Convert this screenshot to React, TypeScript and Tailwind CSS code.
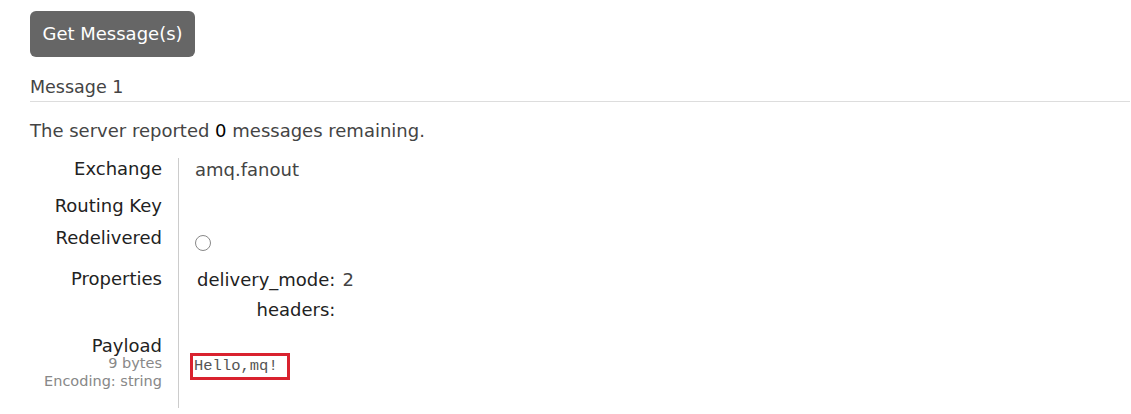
import React from 'react';

const font = { fontFamily: '"DejaVu Sans", Verdana, sans-serif' };

export default function App() {
  return (
    <div className="min-h-screen bg-white pl-[30px] pr-[1px] pt-[11px] text-[18px] leading-[22px] text-[#444]" style={font}>
      <button className="h-[46px] w-[165px] rounded-[6px] bg-[#666] text-white text-[18px]" style={font}>
        Get Message(s)
      </button>

      <div className="mt-[19px] border-b border-[#ddd] pb-[3px] text-[17.5px]">Message 1</div>

      <p className="mt-[18px]">
        The server reported <span className="text-black">0</span> messages remaining.
      </p>

      <div className="mt-[16px] grid grid-cols-[148px_1fr]">
        <div className="h-[37px] pr-4 text-right text-[#222]">Exchange</div>
        <div className="h-[37px] border-l border-[#ccc] pl-4 pt-[1px]">amq.fanout</div>

        <div className="h-[32px] pr-4 text-right text-[#222]">Routing Key</div>
        <div className="h-[32px] border-l border-[#ccc] pl-4"></div>

        <div className="h-[41px] pr-4 text-right text-[#222]">Redelivered</div>
        <div className="h-[41px] border-l border-[#ccc] pl-4 pt-[8px]">
          <span className="block h-[16px] w-[16px] rounded-full border border-[#888] bg-white" />
        </div>

        <div className="h-[67px] pr-4 text-right text-[#222]">Properties</div>
        <div className="h-[67px] border-l border-[#ccc] pl-[18px] pt-[1px]">
          <div className="grid w-fit grid-cols-[auto_auto] gap-x-[7px] gap-y-[8px]">
            <span className="text-right text-[#222]">delivery_mode:</span>
            <span className="text-[#444]">2</span>
            <span className="text-right text-[#222]">headers:</span>
            <span></span>
          </div>
        </div>

        <div className="h-[73px] pr-4 text-right text-[#222]">
          <div>Payload</div>
          <div className="mt-[-3px] text-[14.5px] leading-[18px] text-[#888]">9 bytes</div>
          <div className="text-[14.5px] leading-[18px] text-[#888]">Encoding: string</div>
        </div>
        <div className="h-[73px] border-l border-[#ccc] pl-[11px] pt-[18px]">
          <div className="flex h-[27px] w-[100px] items-center border-[3px] border-[#d9222f] pl-[1px]">
            <span className="text-[15.5px] leading-none text-[#555]" style={{ fontFamily: '"Liberation Mono", "Courier New", monospace' }}>
              Hello,mq!
            </span>
          </div>
        </div>
      </div>
    </div>
  );
}
